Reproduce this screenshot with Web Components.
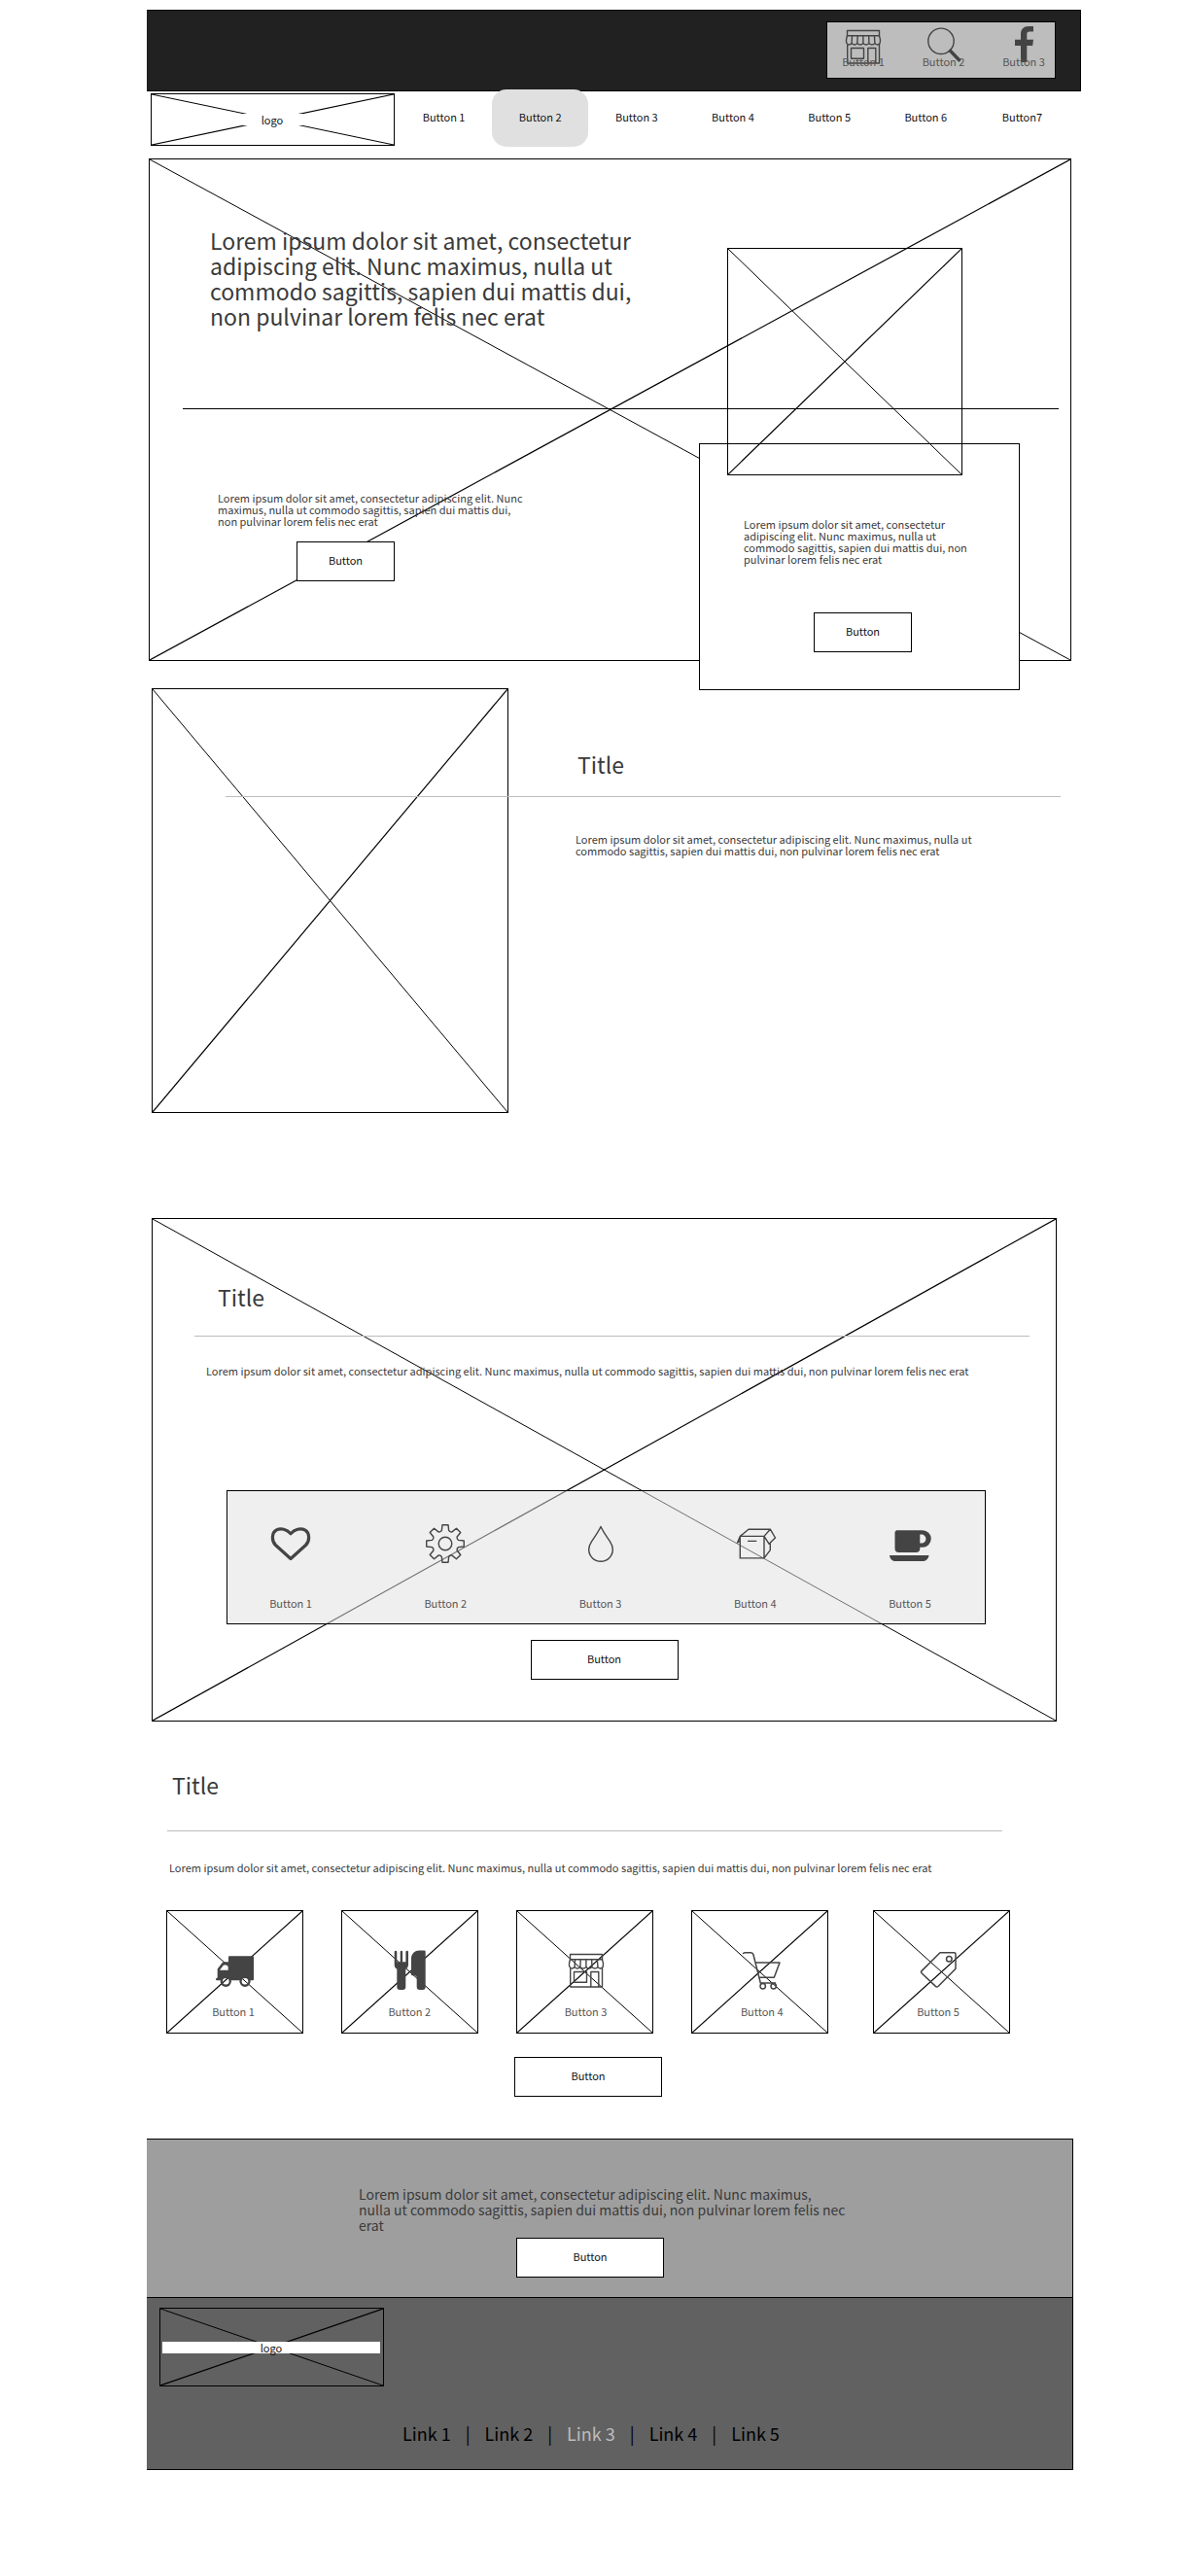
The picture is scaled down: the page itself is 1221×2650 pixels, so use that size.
<!DOCTYPE html>
<html lang="en">
<head>
<meta charset="utf-8">
<title>Wireframe</title>
<style>
  body { margin: 0; background: #fff; font: 11px/12px "Noto Sans CJK SC", "Noto Sans", sans-serif; color: #3a3a3a; }
</style>
</head>
<body>
<wire-page></wire-page>

<script>
const define = (name, html, setup) => {
  const template = document.createElement('template');
  template.innerHTML = html;
  customElements.define(name, class extends HTMLElement {
    constructor() {
      super();
      this.attachShadow({ mode: 'open' }).append(template.content.cloneNode(true));
    }
    connectedCallback() { if (setup) setup(this, this.shadowRoot); }
  });
};

/* Eight-toothed gear outline around (21, 21) */
const gearPath = () => {
  const at = (r, deg) => {
    const a = deg * Math.PI / 180;
    return (21 + r * Math.sin(a)).toFixed(2) + ' ' + (21 - r * Math.cos(a)).toFixed(2);
  };
  let d = '';
  for (let t = 0; t < 360; t += 45) {
    d += (t ? 'L' : 'M') + at(14, t - 15) + 'L' + at(19.5, t - 9) + 'L' + at(19.5, t + 9) +
         'L' + at(14, t + 15) + 'Q' + at(12.6, t + 22.5) + ' ' + at(14, t + 30);
  }
  return d + 'Z';
};

const ICONS = {
  store: `<g class="line"><path d="M4.5 4.5h33v5.2h-33z"/>
    <path d="M4.5 9.7c-1 3-1.3 6-.6 7.600c.8 2.200 4.500 2.200 5.200 0c.8 2.200 5 2.200 5.800 0c.8 2.200 5.200 2.200 6 0c.8 2.200 5.200 2.200 6 0c.8 2.200 5.200 2.200 6 0c.8 2.200 4.700 2.200 5.300 0c.6-1.800.3-4.800-.7-7.600M9.500 9.700l-.4 7.600M15.200 9.700l-.3 7.600M20.900 9.700v7.600M26.700 9.700l.2 7.600M32.400 9.700l.5 7.600"/>
    <path d="M4.700 19v19h32.800V19M8.500 22.500h13v10.700h-13zM25.800 38V22.500h8V38"/></g>`,
  search: `<g class="line"><circle cx="18" cy="15.300" r="13.200"/><path stroke-width="3.400" d="M26.500 24.300L37.600 35.700"/></g>`,
  social: `<path d="M31 0v5.500h-4c-2 0-2.700.8-2.700 3v5.200H31l-.8 6.300h-5.900V37H18V20h-6v-6.300h6V8c0-5 3-8 8-8z"/>`,
  heart: `<path class="line" stroke-width="3.200" d="M21 36.500L5.500 22.500C1 18 1.500 10 6 7.200C11 4.500 17 6.200 21 10.800C25 6.200 31 4.500 36 7.200C40.500 10 41 18 36.500 22.500Z"/>`,
  gear: `<g class="line"><path d="${gearPath()}"/><circle cx="21" cy="21" r="6.800"/></g>`,
  drop: `<path class="line" d="M21 3.500C19 8 14.500 14.500 11.500 18.800C9.500 21.800 8.700 24.300 8.700 27A12.300 12.300 0 0 0 33.300 27C33.300 24.300 32.500 21.800 30.500 18.800C27.500 14.500 23 8 21 3.500Z"/>`,
  box: `<g class="line"><path d="M5.300 13.400H30V35.900H5.300zM5.300 13.400L14 6.200H36.300L30 13.400M36.300 6.200L41.500 15L35 21.200L30 13.400M36.300 20V27.600L30 35.900M13 18.400h9.300M5.300 13.400L2.500 20L5.300 18"/></g>`,
  cup: `<path fill-rule="evenodd" d="M7 7.300H34a8.700 8.700 0 0 1 0 17.500H31.300V26a4 4 0 0 1-4 4H9.500a4 4 0 0 1-4-4V9zM31.300 11.600V20.500H33a4.400 4.400 0 0 0 0-8.900zM0 33H40.500C40 37 37 39 34 39H6.500C3 39 .5 37 0 33z"/>`,
  truck: `<mask id="m"><path fill="#fff" d="M0 0h42v42H0z"/><path fill="#000" d="M7 20.700L11 15.600H15.700V20.700z"/><circle cx="13.300" cy="32.300" r="3.300" fill="#000"/><circle cx="33" cy="32.300" r="3.300" fill="#000"/></mask>
    <g mask="url(#m)"><path d="M17 6.300H41a1 1 0 0 1 1 1V30.300a1 1 0 0 1-1 1H4A1 1 0 0 1 3 30.300V29.500L4.700 28.500V19.500L9.500 13.300Q10.300 12.300 11.500 12.300H16V7.300a1 1 0 0 1 1-1z"/><circle cx="13.300" cy="32.300" r="5.600"/><circle cx="33" cy="32.300" r="5.600"/></g>`,
  cutlery: `<path d="M5.700 2a1.300 1.300 0 0 1 2.600 0V12.300H11.700V2a1.200 1.200 0 0 1 2.400 0V12.300H17.400V2a1.300 1.300 0 0 1 2.600 0V15C20 17.500 18.800 19 17.300 19.500V38a3 3 0 0 1-3 3H11.300a3 3 0 0 1-3-3V19.500C6.800 19 5.700 17.500 5.700 15zM23 8C23.500 3.500 27 .5 31 .5H36.500a1.200 1.200 0 0 1 1.200 1.200V38a3 3 0 0 1-3 3H31.700a3 3 0 0 1-3-3V29C28.700 27 27.500 26.300 26 26.300H24a1 1 0 0 1-1-1z"/>`,
  cart: `<g class="line" stroke-width="1.500"><path d="M1.300 4.200C1.500 3 2.300 2.700 3.500 2.700H9.500C11 2.700 11.500 3.300 12 5L19.300 34H35M13.700 13H39L33.300 28.300H17.700"/><circle cx="21.700" cy="37.300" r="2.700"/><circle cx="32.700" cy="37.300" r="2.700"/></g>`,
  tag: `<g class="line" stroke-width="1.500"><path d="M23 2.700H37.500Q39 2.700 39 4.200V19.300L21 37.500Q19.700 38.500 18.400 37.400L4 23.800Q3 22.700 4 21.600z"/><circle cx="32.300" cy="9.300" r="2.800"/></g>`
};

define('wire-icon', `
<style>
  :host { display: block; width: 42px; height: 42px; }
  svg { display: block; overflow: visible; fill: #444; stroke-width: 1.400px; }
  .line { fill: none; stroke: #444; stroke-linejoin: round; }
</style>
<svg width="42" height="42" viewBox="0 0 42 42" aria-hidden="true"></svg>`,
(host, root) => { root.querySelector('svg').innerHTML = ICONS[host.getAttribute('name')]; });

/* Placeholder picture: frame with crossed diagonals, content on top */
define('wire-image', `
<style>
  :host { display: grid; position: relative; box-sizing: border-box; border: 1px solid #000; }
  svg { position: absolute; inset: 0; width: 100%; height: 100%; pointer-events: none; }
  line { stroke: #000; stroke-width: 1px; }
  .rising { stroke-width: 1.200px; }
  .content { position: relative; min-width: 0; }
</style>
<svg aria-hidden="true"><line x1="0" y1="0" x2="100%" y2="100%"/><line class="rising" x1="0" y1="100%" x2="100%" y2="0"/></svg>
<div class="content"><slot></slot></div>`);

define('wire-logo', `
<style>
  :host { display: block; }
  wire-image { height: 100%; align-items: center; }
  span { display: block; margin: 0 3px 0 2px; background: #fff; text-align: center; color: #111; }
</style>
<wire-image><span><slot></slot></span></wire-image>`);

define('wire-button', `
<style>
  :host { display: block; width: 152px; }
  :host([compact]) { width: 101px; }
  button { display: block; width: 100%; height: 41px; padding: 0 0 3px; border: 1px solid #000; border-radius: 0; background: #fff; font: inherit; color: #111; }
</style>
<button type="button"><slot></slot></button>`);

define('wire-rule', `
<style>
  :host { display: block; }
  hr { margin: 0; border: 0; height: 1px; background: var(--rule, #bdbdbd); }
</style>
<hr>`);

define('wire-title', `
<style>
  :host { display: block; }
  h2 { margin: 0; font: inherit; font-size: 23px; line-height: 24px; }
</style>
<h2><slot></slot></h2>`);

define('icon-button', `
<style>
  :host { display: block; width: 48px; }
  button { display: flex; flex-direction: column; align-items: center; width: 100%; padding: 0; border: 0; background: none; font: inherit; color: #555; white-space: nowrap; }
  span { margin-top: var(--label-gap); }
</style>
<button type="button"><span><slot></slot></span></button>`,
(host, root) => {
  const icon = document.createElement('wire-icon');
  icon.setAttribute('name', host.getAttribute('icon'));
  root.querySelector('button').prepend(icon);
});

define('icon-strip', `
<style>
  :host { display: flex; justify-content: space-between; }
</style>
<slot></slot>`);

define('top-bar', `
<style>
  :host { display: flex; justify-content: flex-end; box-sizing: border-box; height: 84px; padding: 11px 25px 0 0; background: #212121; border: solid #000; border-width: 1px 1px 1px 0; }
  icon-strip { box-sizing: border-box; width: 236px; height: 59px; padding: 4px 8px 0 13px; border: 1px solid #000; background: #bdbdbd; --label-gap: -12px; }
</style>
<icon-strip>
  <icon-button icon="store">Button 1</icon-button>
  <icon-button icon="search">Button 2</icon-button>
  <icon-button icon="social">Button 3</icon-button>
</icon-strip>`);

define('nav-item', `
<style>
  :host { display: block; flex: 1; }
  a { display: flex; align-items: center; justify-content: center; box-sizing: border-box; height: 59px; padding-bottom: 3px; border-radius: 15px; color: #111; text-decoration: none; }
  :host([active]) a { background: #e0e0e0; }
</style>
<a href="#"><slot></slot></a>`);

define('main-nav', `
<style>
  :host { display: flex; align-items: flex-start; height: 69px; padding: 0 11px 0 4px; }
  wire-logo { width: 251px; height: 54px; margin-top: 2px; }
  nav { display: flex; flex: 1; margin: -2px 0 0 1px; }
</style>
<wire-logo>logo</wire-logo>
<nav>
  <nav-item>Button 1</nav-item>
  <nav-item active>Button 2</nav-item>
  <nav-item>Button 3</nav-item>
  <nav-item>Button 4</nav-item>
  <nav-item>Button 5</nav-item>
  <nav-item>Button 6</nav-item>
  <nav-item>Button7</nav-item>
</nav>`);

define('hero-card', `
<style>
  :host { display: block; border: 1px solid #000; background: #fff; padding: 76px 45px 38px; }
  p { margin: 0 0 49px; width: 235px; }
  wire-button { margin-left: 72px; }
</style>
<p><slot></slot></p>
<wire-button compact>Button</wire-button>`);

define('hero-section', `
<style>
  :host { display: block; margin: 0 10px 0 2px; }
  .stack { display: grid; }
  .columns, wire-rule { grid-area: 1 / 1; }
  wire-rule { --rule: #000; margin: 256px 12px 0 34px; z-index: 1; height: 1px; }
  .columns { display: flex; justify-content: space-between; padding-right: 52px; }
  .copy { padding: 70px 0 0 62px; }
  h1 { margin: 0 0 168px; width: 445px; font-size: 23px; line-height: 26px; font-weight: 400; }
  p { margin: 0 0 15px 8px; width: 318px; }
  .copy wire-button { margin-left: 89px; }
  .aside { width: 330px; margin-bottom: -31px; }
  .photo { width: 242px; height: 234px; margin: 91px 0 -33px 29px; z-index: 1; }
</style>
<wire-image>
  <div class="stack">
    <div class="columns">
      <div class="copy">
        <h1>Lorem ipsum dolor sit amet, consectetur adipiscing elit. Nunc maximus, nulla ut commodo sagittis, sapien dui mattis dui, non pulvinar lorem felis nec erat</h1>
        <p>Lorem ipsum dolor sit amet, consectetur adipiscing elit. Nunc maximus, nulla ut commodo sagittis, sapien dui mattis dui, non pulvinar lorem felis nec erat</p>
        <wire-button compact>Button</wire-button>
      </div>
      <div class="aside">
        <wire-image class="photo"></wire-image>
        <hero-card>Lorem ipsum dolor sit amet, consectetur adipiscing elit. Nunc maximus, nulla ut commodo sagittis, sapien dui mattis dui, non pulvinar lorem felis nec erat</hero-card>
      </div>
    </div>
    <wire-rule></wire-rule>
  </div>
</wire-image>`);

define('feature-section', `
<style>
  :host { display: grid; margin: 28px 21px 0 5px; }
  .columns, wire-rule { grid-area: 1 / 1; }
  .columns { display: flex; gap: 69px; }
  wire-image { width: 367px; height: 437px; flex: none; }
  .copy { padding-top: 66px; }
  wire-title { padding-left: 2px; }
  p { margin: 59px 0 0; max-width: 420px; }
  wire-rule { margin: 111px 0 0 76px; z-index: 1; height: 1px; }
</style>
<div class="columns">
  <wire-image></wire-image>
  <div class="copy">
    <wire-title>Title</wire-title>
    <p>Lorem ipsum dolor sit amet, consectetur adipiscing elit. Nunc maximus, nulla ut commodo sagittis, sapien dui mattis dui, non pulvinar lorem felis nec erat</p>
  </div>
</div>
<wire-rule></wire-rule>`);

define('services-section', `
<style>
  :host { display: block; margin: 108px 25px 0 5px; }
  .body { display: flex; flex-direction: column; padding: 68px 0 42px; }
  wire-title { margin-left: 67px; }
  wire-rule { margin: 28px 27px 29px 43px; }
  p { margin: 0 0 117px 55px; }
  icon-strip { height: 103px; padding: 33px 53px 0 41px; margin: 0 72px 16px 76px; border: 1px solid #000; background: rgba(224, 224, 224, .5); --label-gap: 34px; }
  wire-button { align-self: center; }
</style>
<wire-image>
  <div class="body">
    <wire-title>Title</wire-title>
    <wire-rule></wire-rule>
    <p>Lorem ipsum dolor sit amet, consectetur adipiscing elit. Nunc maximus, nulla ut commodo sagittis, sapien dui mattis dui, non pulvinar lorem felis nec erat</p>
    <icon-strip>
      <icon-button icon="heart">Button 1</icon-button>
      <icon-button icon="gear">Button 2</icon-button>
      <icon-button icon="drop">Button 3</icon-button>
      <icon-button icon="box">Button 4</icon-button>
      <icon-button icon="cup">Button 5</icon-button>
    </icon-strip>
    <wire-button>Button</wire-button>
  </div>
</wire-image>`);

define('products-section', `
<style>
  :host { display: flex; flex-direction: column; padding: 53px 73px 43px 20px; }
  wire-title { margin-left: 6px; }
  wire-rule { margin: 35px 8px 31px 1px; }
  p { margin: 0 0 38px 3px; }
  .gallery { display: grid; margin-bottom: 24px; }
  .tiles, icon-strip { grid-area: 1 / 1; }
  .tiles { display: flex; justify-content: space-between; }
  .group { display: flex; gap: 39px; }
  wire-image { width: 141px; height: 127px; }
  icon-strip { padding: 41px 50px 0 45px; z-index: 1; --label-gap: 15px; }
  wire-button { align-self: center; }
</style>
<wire-title>Title</wire-title>
<wire-rule></wire-rule>
<p>Lorem ipsum dolor sit amet, consectetur adipiscing elit. Nunc maximus, nulla ut commodo sagittis, sapien dui mattis dui, non pulvinar lorem felis nec erat</p>
<div class="gallery">
  <div class="tiles">
    <div class="group">
      <wire-image></wire-image><wire-image></wire-image><wire-image></wire-image><wire-image></wire-image>
    </div>
    <wire-image></wire-image>
  </div>
  <icon-strip>
    <icon-button icon="truck">Button 1</icon-button>
    <icon-button icon="cutlery">Button 2</icon-button>
    <icon-button icon="store">Button 3</icon-button>
    <icon-button icon="cart">Button 4</icon-button>
    <icon-button icon="tag">Button 5</icon-button>
  </icon-strip>
</div>
<wire-button>Button</wire-button>`);

define('call-to-action', `
<style>
  :host { display: block; margin-right: 8px; padding: 48px 0 20px; background: #9e9e9e; border: solid #000; border-width: 1px 1px 0 0; }
  p { margin: 0 0 5px 218px; width: 516px; font-size: 14px; line-height: 16px; }
  wire-button { margin-left: 380px; }
</style>
<p><slot></slot></p>
<wire-button>Button</wire-button>`);

define('footer-link', `
<style>
  :host { display: block; }
  a { color: #000; text-decoration: none; }
  :host([active]) a { color: #bdbdbd; }
</style>
<a href="#"><slot></slot></a>`);

define('site-footer', `
<style>
  :host { display: block; margin-right: 8px; padding: 10px 0 27px 13px; background: #616161; border: solid #000; border-width: 1px 1px 1px 0; }
  wire-logo { width: 231px; height: 81px; }
  nav { display: flex; gap: 15px; margin: 38px 0 0 250px; font-size: 18px; line-height: 20px; color: #000; }
</style>
<wire-logo>logo</wire-logo>
<nav>
  <footer-link>Link 1</footer-link><span>|</span>
  <footer-link>Link 2</footer-link><span>|</span>
  <footer-link active>Link 3</footer-link><span>|</span>
  <footer-link>Link 4</footer-link><span>|</span>
  <footer-link>Link 5</footer-link>
</nav>`);

define('wire-page', `
<style>
  :host { display: block; padding: 10px 109px 109px 151px; }
</style>
<header><top-bar></top-bar><main-nav></main-nav></header>
<main>
  <hero-section></hero-section>
  <feature-section></feature-section>
  <services-section></services-section>
  <products-section></products-section>
  <call-to-action>Lorem ipsum dolor sit amet, consectetur adipiscing elit. Nunc maximus,<br>nulla ut commodo sagittis, sapien dui mattis dui, non pulvinar lorem felis nec erat</call-to-action>
</main>
<site-footer></site-footer>`);
</script>
</body>
</html>
